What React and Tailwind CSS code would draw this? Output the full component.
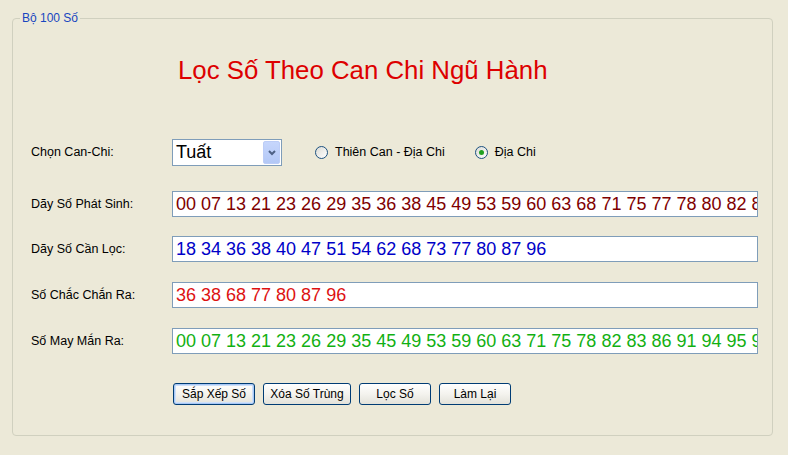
import React from "react";

const font = { fontFamily: '"Liberation Sans", Arial, sans-serif' };

function Radio({ checked, label }) {
  return (
    <div className="flex items-center">
      <div className="w-[13px] h-[13px] rounded-full border border-[#1c5180] bg-gradient-to-br from-[#dcdcd6] to-white flex items-center justify-center">
        {checked && <div className="w-[5px] h-[5px] rounded-full bg-[#21a121]" />}
      </div>
      <span className="ml-[7px] text-[12.5px] text-black">{label}</span>
    </div>
  );
}

function NumberBox({ value, color }) {
  return (
    <div className="w-[586px] h-[26px] border border-[#7f9db9] bg-white pl-[3px] overflow-hidden whitespace-nowrap flex items-center">
      <span className={`text-[18px] leading-[20px] ${color}`}>{value}</span>
    </div>
  );
}

function Row({ label, children, className }) {
  return (
    <div className={`flex items-center ${className}`}>
      <div className="w-[141px] text-[12.5px] text-black">{label}</div>
      {children}
    </div>
  );
}

function XpButton({ label, w, focused }) {
  return (
    <button
      className={`${w} h-[22px] rounded-[3px] border border-[#003c74] bg-gradient-to-b from-white via-[#f4f3ee] to-[#e3e2da] text-[12px] text-black ${focused ? "shadow-[inset_0_0_0_1px_#a8c8f6,inset_0_0_0_2px_#cee0f9]" : ""}`}
      style={font}
    >
      {label}
    </button>
  );
}

export default function App() {
  return (
    <div className="w-[788px] h-[455px] bg-[#ece9d8] pt-[18px] pl-[12px]" style={font}>
      <div className="relative w-[761px] h-[418px] border border-[#d0d0bf] rounded-[4px]">
        <div className="absolute -top-[8px] left-[7px] bg-[#ece9d8] px-[2px] text-[12px] leading-[14px] text-[#1846c0]">
          Bộ 100 Số
        </div>

        <div className="mt-[36px] ml-[165px] text-[25.8px] leading-[30px] text-[#dd0000]">
          Lọc Số Theo Can Chi Ngũ Hành
        </div>

        <div className="pl-[18px]">
          <Row label="Chọn Can-Chi:" className="mt-[54px] h-[27px]">
            <div className="w-[110px] h-[27px] border border-[#7f9db9] bg-white flex items-center justify-between pl-[3px] pr-[1px]">
              <span className="text-[18px] text-black">Tuất</span>
              <div className="w-[17px] h-[23px] rounded-[2px] bg-gradient-to-b from-[#c6d6fc] to-[#b3c8f6] border border-[#bccdf7] flex items-center justify-center">
                <svg width="8" height="6" viewBox="0 0 8 6">
                  <path d="M1 1 L4 4 L7 1" stroke="#4d6185" strokeWidth="2" fill="none" />
                </svg>
              </div>
            </div>
            <div className="ml-[33px]">
              <Radio label="Thiên Can - Địa Chi" />
            </div>
            <div className="ml-[30px]">
              <Radio checked label="Địa Chi" />
            </div>
          </Row>

          <Row label="Dãy Số Phát Sinh:" className="mt-[25px]">
            <NumberBox
              color="text-[#800000]"
              value="00 07 13 21 23 26 29 35 36 38 45 49 53 59 60 63 68 71 75 77 78 80 82 83 86 91 94 95 96"
            />
          </Row>
          <Row label="Dãy Số Cần Lọc:" className="mt-[19px]">
            <NumberBox color="text-[#0000c8]" value="18 34 36 38 40 47 51 54 62 68 73 77 80 87 96" />
          </Row>
          <Row label="Số Chắc Chắn Ra:" className="mt-[20px]">
            <NumberBox color="text-[#dd1111]" value="36 38 68 77 80 87 96" />
          </Row>
          <Row label="Số May Mắn Ra:" className="mt-[20px]">
            <NumberBox
              color="text-[#12b012]"
              value="00 07 13 21 23 26 29 35 45 49 53 59 60 63 71 75 78 82 83 86 91 94 95 96"
            />
          </Row>

          <div className="mt-[29px] ml-[142px] flex gap-[8px]">
            <XpButton label="Sắp Xếp Số" w="w-[82px]" focused />
            <XpButton label="Xóa Số Trùng" w="w-[88px]" />
            <XpButton label="Lọc Số" w="w-[72px]" />
            <XpButton label="Làm Lại" w="w-[72px]" />
          </div>
        </div>
      </div>
    </div>
  );
}
